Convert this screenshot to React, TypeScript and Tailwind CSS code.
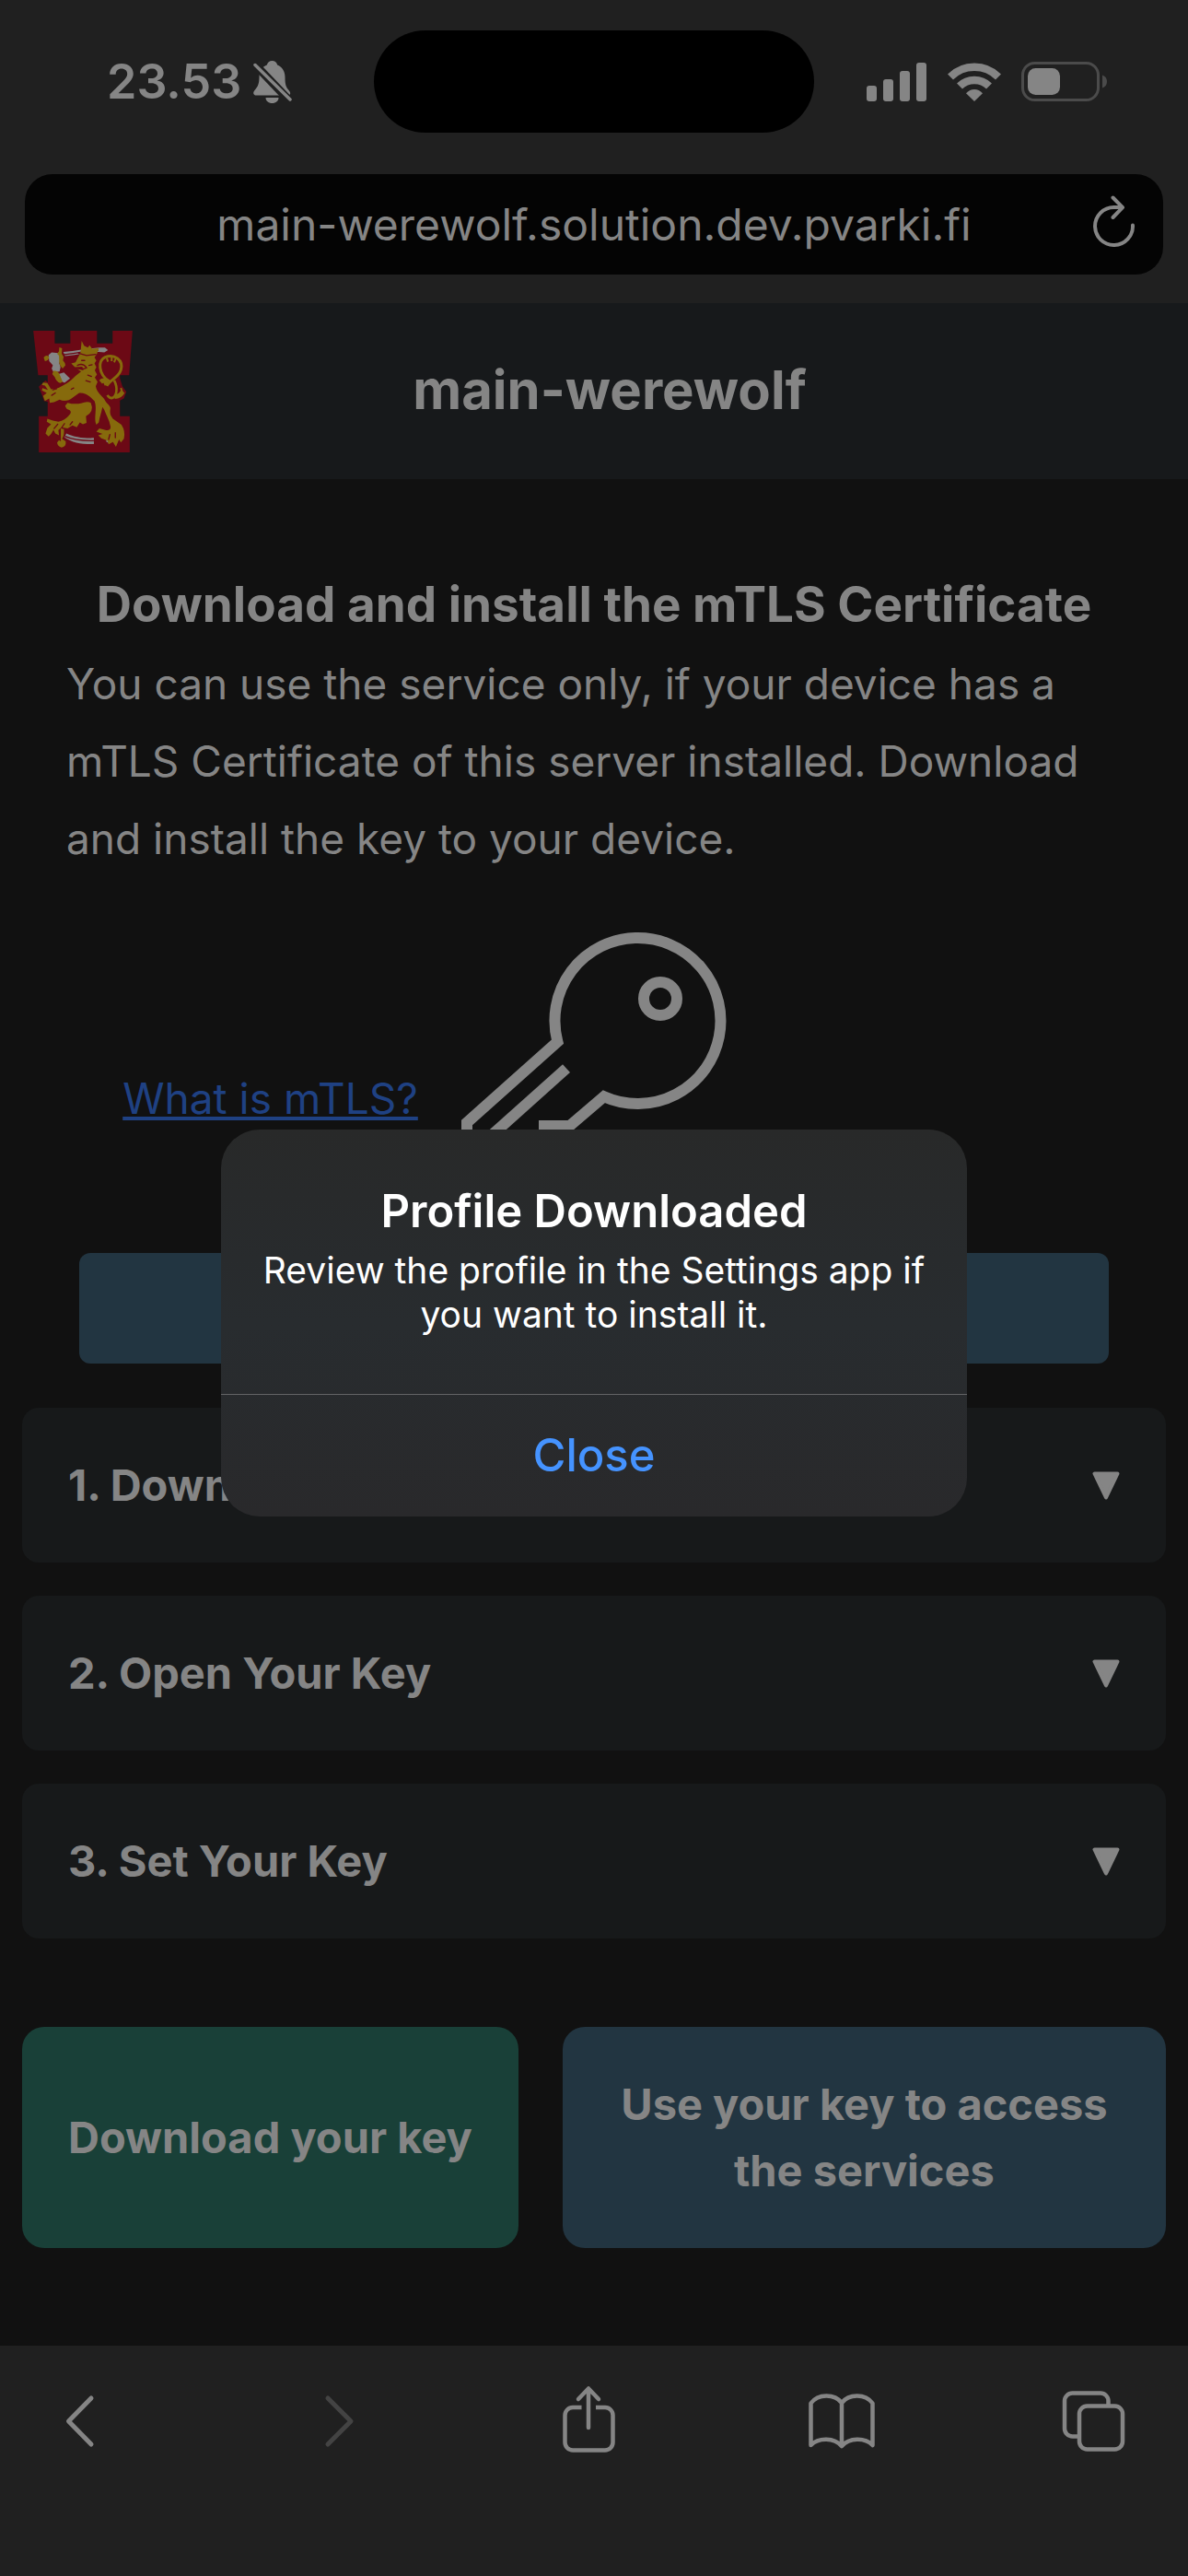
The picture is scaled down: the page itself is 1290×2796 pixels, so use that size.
import React from "react";

function BellOff() {
  return (
    <svg viewBox="0 0 42 46" className="h-[46px] w-[42px]" fill="currentColor" aria-label="Silent mode" role="img">
      <defs>
        <mask id="bell-cut">
          <rect width="42" height="46" fill="#fff" />
          <path d="M0 2 41 45" stroke="#000" strokeWidth="9" />
        </mask>
      </defs>
      <g mask="url(#bell-cut)">
        <path d="M20.500 0c3 0 5.200 2 5.700 4.500C32 7 34.500 12 34.500 18c0 8 1 10.500 4.500 14.500 2 2.300 1.500 5-1.500 5H3.500c-3.500 0-4.300-3-2-5.500C5 28 6.500 25 6.500 17.500c0-6 3-11 8.300-13C15.500 2 17.500 0 20.500 0z" />
        <path d="M13.500 40h14c0 3.500-3 6-7 6s-7-2.500-7-6z" />
      </g>
      <path d="M2 4.500 40 42" stroke="currentColor" strokeWidth="3.500" strokeLinecap="round" />
    </svg>
  );
}

function Signal() {
  return (
    <svg viewBox="0 0 66 42" className="h-[42px] w-[66px]" fill="currentColor" aria-label="Signal strength" role="img">
      <rect x="0" y="25" width="11" height="17" rx="3" />
      <rect x="18" y="18" width="11" height="24" rx="3" />
      <rect x="36" y="9" width="11" height="33" rx="3" />
      <rect x="54" y="0" width="11" height="42" rx="3" />
    </svg>
  );
}

function Wifi() {
  return (
    <svg viewBox="0 0 58 42" className="h-[42px] w-[58px]" aria-label="Wi-Fi" role="img">
      <path d="M3 15.500a37 37 0 0 1 52 0" fill="none" stroke="currentColor" strokeWidth="8.500" />
      <path d="M13 25.500a22.800 22.800 0 0 1 32 0" fill="none" stroke="currentColor" strokeWidth="8.500" />
      <path d="M20 33.300c5-5.800 13-5.800 18 0L29 42z" fill="currentColor" />
    </svg>
  );
}

function Battery() {
  return (
    <svg viewBox="0 0 94 44" className="h-[44px] w-[94px]" aria-label="Battery" role="img">
      <rect x="1.500" y="1.500" width="82" height="40" rx="13" fill="none" stroke="#4b4b4b" strokeWidth="3" />
      <path d="M88 14.500c3.500 1.300 5 4 5 7s-1.500 5.700-5 7z" fill="#4b4b4b" />
      <rect x="7" y="7" width="35" height="29" rx="8.500" fill="currentColor" />
    </svg>
  );
}

function Reload() {
  return (
    <svg viewBox="0 0 46 56" className="h-[56px] w-[46px]" fill="none" stroke="currentColor" strokeWidth="4" strokeLinecap="round" strokeLinejoin="round">
      <path d="M43 32.500A20.500 20.500 0 1 1 22.500 13H31" />
      <path d="M21.500 2.500 32 13.200 21.500 24" />
    </svg>
  );
}

function Crest() {
  return (
    <svg viewBox="48 53 324 397" className="h-[132px] w-[108px] overflow-visible" aria-label="Coat of arms" role="img">
      <path fill="#6c0915" d="M48 53h70v41h51V53h87v41h51V53h65l-11 145h-30v134h32v118H66V332h29V198H64z" />
      <path fill="#6c0915" d="M66 236 88 215l12 12-3 58-14-3-6-18zM329 203l10 31 13 18-8 22-16 8z" />
      <g fill="#858585">
        <path d="M146 122c40-2 80-12 118-14l18 0 10 8-12 8-18-2c-36-1-72 10-110 14z" />
        <path d="M98 132l10-8 22 2 8 12-5 22 4 12-3 14-20 2-6-12 4-10-12-14z" />
        <path d="M130 194l18-5 12 12 8 8-18 14-16-8z" />
        <path d="M156 388c26 12 54 16 90 15v20c-40 1-72-5-96-22z" />
        <path d="M288 404l14 1-8 14-8-4z" />
      </g>
      <path d="M148 131c38-4 76-13 112-14M152 398c28 12 56 15 94 14" fill="none" stroke="#6c0915" strokeWidth="4" />
      <g fill="#866a0c">
        <path d="M82 140q8-10 18-2-2 14-14 14zM133 107l9 3-1 18 6 10-2 12q8 8 8 16l-9 10q-10-8-11-18l-1-24-6-6 6-8zM114 184q14-2 20 12l10 24-8 4q-12-4-18-20l-8-10z" />
        <path d="M206 86l8 16 12 6 6-8 8 12 22-2-6 18-8 12 6 10-6 10 6 12-5 10 7 14-7 10 9 14-6 14c4 22 20 30 28 42 6 14 18 18 20 30-2 14-2 22 8 34l28 20q14 22 8 46l-10 12-6-10-10 24-10-16-14 8-4-12-20-8-10-10 14-4-20-8 10-10 22 6c12 0 16-6 14-14-4-20-14-36-20-52l-6-10c-4 20-10 36-12 50l-8 8c-10-22 4-52-6-78-12-10-24-28-50-26l-20 14q-22 18-44 8l-18 8-14 2-2-14-14 8-6-16 12-10-16-8 2-8 18 6-10-14-10-2 4-8 14 2 12 20 18-2c22-10 44-22 62-42l18-14-14-10 22 6-4-12-24 2-12-12 14-4 8-16 8-14z" />
        <path d="M160 288q22 6 44 2 20-8 32-2 12 28-16 44l2 22-12 4-10-6-10 16-14-6-16 10-20-4-10 10 2 16-12-6-6-12-8 14-8 8-10-10 6-18 12-12-14-8 2-10 18 6 18 4q22-4 34-20 12-10 2-18-10-2-14-14z" />
        <path d="M138 372l10 2q2 20-6 32l12 8q2 18-14 20-14-4-14-16l6-8 6 4z" />
      </g>
      <g fill="none" stroke="#866a0c" strokeLinejoin="round">
        <path strokeWidth="9" d="M296 218c-36-22-38-68-13-79 28-11 61 8 51 42-8 26-38 34-46 52" />
        <path strokeWidth="8" d="M312 215c14 26 8 54-8 58q-8 0-14-10" />
        <path strokeWidth="15" d="M314 268q18 0 26-16M268 220q14-12 20 10" />
        <path strokeWidth="6" d="M288 142l4 12M304 138l0 14M318 142l-6 14M334 240l6 18" />
      </g>
      <g fill="none" stroke="#6c0915" strokeWidth="4" strokeLinecap="round">
        <path d="M196 126l26 8 30-4M192 166c12-6 22-4 30 8-10 6-20 4-28 2M206 150l10 0M224 272q14 6 18 20M226 198l12 4M220 216l14 4M240 164l-10 2M180 240l-8 4M128 358l-12 14M150 356l-8 12M176 350l-8 10M298 392l-4 16M316 386l0 16M112 246l12-4M108 264l12-8" />
      </g>
    </svg>
  );
}

function KeyDrawing() {
  return (
    <svg viewBox="0 0 24 24" className="size-[288px] shrink-0" fill="none" stroke="currentColor" strokeWidth="1" aria-label="Key" role="img">
      <path d="M7 17.500h2.800l3.100-2.650A7.500 7.500 0 1 0 8.700 9.900L.500 17.200v6.300H6.500v-2.500H9v-3.500" />
      <path d="M9.500 12.300.900 20" />
      <circle cx="18" cy="6" r="1.500" />
    </svg>
  );
}

function Triangle() {
  return (
    <svg viewBox="0 0 30 31" className="h-[31px] w-[30px]" fill="currentColor" stroke="currentColor" strokeWidth="4" strokeLinejoin="round" aria-hidden="true">
      <path d="M2.500 2.500h25L15 28.500z" />
    </svg>
  );
}

const toolbar = [
  { name: "Back", off: false, art: <path strokeWidth="5" d="M61 23 36.500 48 61 73" /> },
  { name: "Forward", off: true, art: <path strokeWidth="5" d="M42 23 67 48 42 73" /> },
  {
    name: "Share",
    off: false,
    art: (
      <>
        <path d="M50 55V13M39 24 50 12.500 61 24" />
        <path strokeLinecap="butt" d="M42.500 33H33a8.500 8.500 0 0 0-8.500 8.500V71a8.500 8.500 0 0 0 8.500 8.500h35a8.500 8.500 0 0 0 8.500-8.500V41.500A8.500 8.500 0 0 0 68 33H58" />
      </>
    ),
  },
  {
    name: "Bookmarks",
    off: false,
    art: (
      <path d="M49 75V28C41 18 23.500 18 15.500 28.500V74C23.500 65.500 41 65.500 49 75 57 65.500 74.500 65.500 82.500 74V28.500C74.500 18 57 18 49 28" />
    ),
  },
  {
    name: "Tabs",
    off: false,
    art: (
      <>
        <rect x="32" y="31.500" width="47" height="47" rx="8.500" />
        <path strokeLinecap="butt" d="M32 64.500H24.500A8.500 8.500 0 0 1 16 56V26a8.500 8.500 0 0 1 8.500-8.500H55a8.500 8.500 0 0 1 8.500 8.500v5.500" />
      </>
    ),
  },
];

const steps = ["1. Download Your Key", "2. Open Your Key", "3. Set Your Key"];

export default function App() {
  return (
    <div className="relative flex min-h-screen flex-col bg-[#111111] font-['Inter',sans-serif] text-[#858585]">
      <header className="bg-[#202020] pt-[33px] pb-[31px]">
        <div className="grid grid-cols-[1fr_auto_1fr] items-center">
          <div className="flex items-center gap-[13px] pl-[116px]">
            <span className="text-[52px] leading-[60px] font-semibold">23.53</span>
            <BellOff />
          </div>
          <div className="h-[111px] w-[478px] rounded-full bg-black" />
          <div className="flex items-center gap-[22px] pl-[57px]">
            <Signal />
            <Wifi />
            <Battery />
          </div>
        </div>
        <div className="mx-[27px] mt-[45px] flex h-[109px] items-center rounded-[30px] bg-[#040404] px-[30px]">
          <div className="w-[46px]" />
          <p className="flex-1 text-center text-[48px] leading-[60px]">main-werewolf.solution.dev.pvarki.fi</p>
          <button type="button" aria-label="Reload" className="-mt-2">
            <Reload />
          </button>
        </div>
      </header>

      <div className="flex h-[191px] items-center bg-[#17191b] pr-[110px] pl-[36px]">
        <Crest />
        <h1 className="flex-1 pb-[3px] text-center text-[58px] leading-[72px] font-bold">main-werewolf</h1>
      </div>

      <main className="flex-1 px-6 pt-[92px] pb-[106px]">
        <section className="px-12">
          <h2 className="text-center text-[53px] leading-[88px] font-bold whitespace-nowrap">
            Download and install the mTLS Certificate
          </h2>
          <p className="text-[46px] leading-[84px]">
            You can use the service only, if your device has a<br />
            mTLS Certificate of this server installed. Download<br />
            and install the key to your device.
          </p>
        </section>
        <section className="mt-[60px] px-[62px]">
          <div className="flex items-center">
            <div className="flex flex-1 justify-center pt-[72px]">
              <a href="#mtls" className="text-[46px] leading-[84px] whitespace-nowrap text-[#1f4183] underline">
                What is mTLS?
              </a>
            </div>
            <KeyDrawing />
            <div className="flex-1" />
          </div>
          <button type="button" aria-label="Certificate" className="mt-[60px] block h-[120px] w-full rounded-xl bg-[#223541]" />
        </section>
        <section className="mt-12 flex flex-col gap-9">
          {steps.map((label) => (
            <button
              key={label}
              type="button"
              aria-expanded="false"
              className="flex h-[168px] items-center justify-between rounded-[18px] bg-[#17191a] px-[50px] text-[47px] leading-[72px] font-bold"
            >
              {label}
              <Triangle />
            </button>
          ))}
        </section>
        <div className="mt-24 flex gap-12 text-[47px] leading-[72px] font-bold">
          <button type="button" className="h-[240px] rounded-3xl bg-[#194038] px-[50px] whitespace-nowrap">
            Download your key
          </button>
          <button type="button" className="h-[240px] flex-1 rounded-3xl bg-[#223541] px-12">
            Use your key to access the services
          </button>
        </div>
      </main>

      <nav className="flex h-[250px] items-start justify-between bg-[#202020] pt-[34px] pr-[54px] pl-[38px]">
        {toolbar.map((item) => (
          <button key={item.name} type="button" aria-label={item.name} disabled={item.off} className="disabled:text-[#434343]">
            <svg viewBox="0 0 96 96" className="size-24" fill="none" stroke="currentColor" strokeWidth="4.500" strokeLinecap="round" strokeLinejoin="round">
              {item.art}
            </svg>
          </button>
        ))}
      </nav>

      <div className="absolute inset-0 flex items-center justify-center pt-[75px]">
        <div role="alertdialog" aria-labelledby="alert-title" aria-describedby="alert-text" className="w-[810px] overflow-hidden rounded-[42px] bg-linear-to-b from-[#282929] via-[#282c2f] to-[#29292b] text-center">
          <div className="border-b border-[#636466] px-8 pt-[57px] pb-[62px] text-white">
            <h2 id="alert-title" className="text-[49px] leading-[64px] font-semibold">Profile Downloaded</h2>
            <p id="alert-text" className="pt-2 text-[39px] leading-[48px]">
              Review the profile in the Settings app if<br />
              you want to install it.
            </p>
          </div>
          <button type="button" className="h-[132px] w-full text-[49px] leading-[60px] font-medium text-[#4593ff]">
            Close
          </button>
        </div>
      </div>
    </div>
  );
}
